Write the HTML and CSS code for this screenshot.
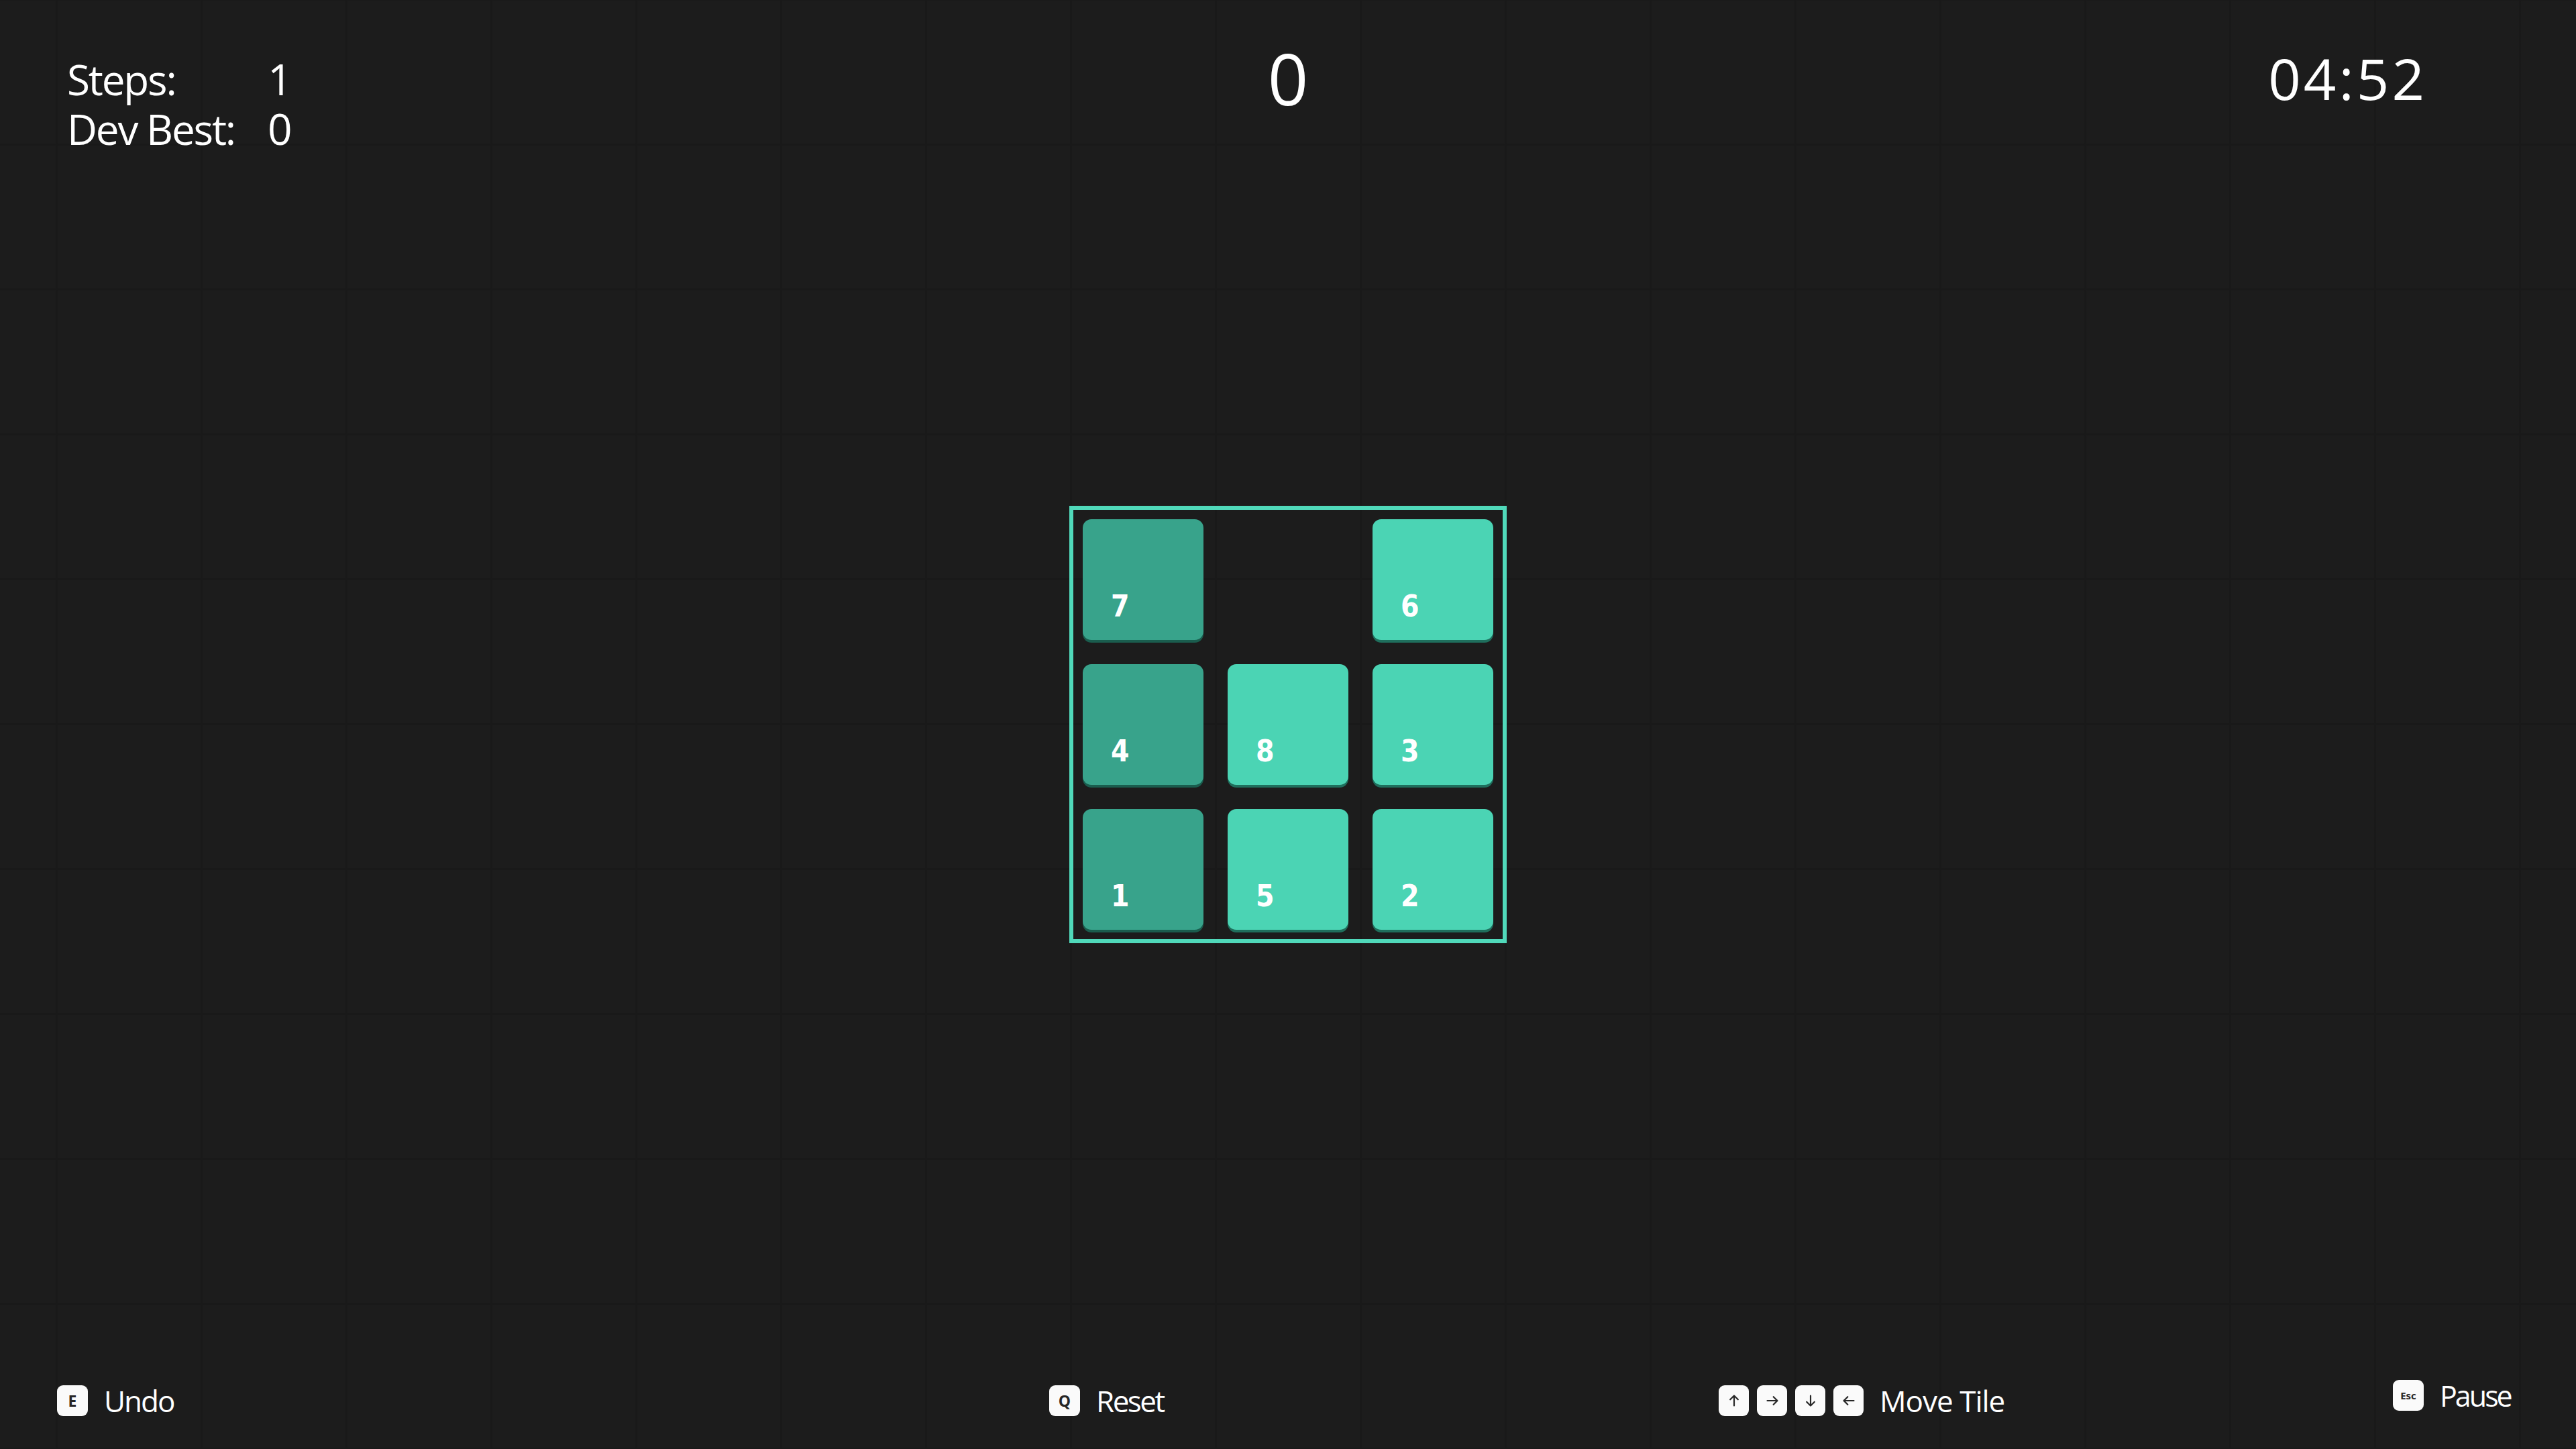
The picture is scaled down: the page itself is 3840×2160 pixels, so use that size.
FILE: index.html
```html
<!DOCTYPE html>
<html lang="en">
<head>
<meta charset="utf-8">
<title>Sliding Puzzle</title>
<link rel="stylesheet" href="styles.css">
</head>
<body>
<div class="screen">
  <header class="hud">
    <div class="stats">
      <span class="stat-label">Steps:</span><span class="stat-value">1</span>
      <span class="stat-label">Dev Best:</span><span class="stat-value">0</span>
    </div>
    <div class="score">0</div>
    <div class="timer">04:52</div>
  </header>

  <main class="stage">
    <div class="board">
      <div class="tile tile--placed"><span class="tile-num">7</span></div>
      <div class="cell-empty"></div>
      <div class="tile"><span class="tile-num">6</span></div>
      <div class="tile tile--placed"><span class="tile-num">4</span></div>
      <div class="tile"><span class="tile-num">8</span></div>
      <div class="tile"><span class="tile-num">3</span></div>
      <div class="tile tile--placed"><span class="tile-num">1</span></div>
      <div class="tile"><span class="tile-num">5</span></div>
      <div class="tile"><span class="tile-num">2</span></div>
    </div>
  </main>

  <footer class="controls">
    <div class="ctl ctl--undo">
      <span class="key">E</span>
      <span class="ctl-label">Undo</span>
    </div>
    <div class="ctl ctl--reset">
      <span class="key">Q</span>
      <span class="ctl-label">Reset</span>
    </div>
    <div class="ctl ctl--move">
      <span class="keys">
        <span class="key key--arrow"><svg viewBox="0 0 24 24"><path d="M12 21V3M5 10l7-7 7 7"/></svg></span>
        <span class="key key--arrow"><svg viewBox="0 0 24 24"><path d="M3 12h18M14 5l7 7-7 7"/></svg></span>
        <span class="key key--arrow"><svg viewBox="0 0 24 24"><path d="M12 3v18M5 14l7 7 7-7"/></svg></span>
        <span class="key key--arrow"><svg viewBox="0 0 24 24"><path d="M21 12H3M10 5l-7 7 7 7"/></svg></span>
      </span>
      <span class="ctl-label">Move Tile</span>
    </div>
    <div class="ctl ctl--pause">
      <span class="key key--small">Esc</span>
      <span class="ctl-label">Pause</span>
    </div>
  </footer>
</div>
</body>
</html>
```

FILE: styles.css
```css
html, body {
  margin: 0;
  padding: 0;
}

body {
  width: 3840px;
  height: 2160px;
  overflow: hidden;
  background-color: #1c1c1c;
  background-image:
    linear-gradient(to right, #191919 3px, transparent 3px),
    linear-gradient(to bottom, #191919 3px, transparent 3px);
  background-size: 216px 216px;
  background-position: 83px 214px;
  color: #ffffff;
  font-family: "Open Sans", "Noto Sans", "Liberation Sans", sans-serif;
}

.screen {
  width: 3840px;
  height: 2160px;
  display: flex;
  flex-direction: column;
}

/* ---------- HUD ---------- */
.hud {
  height: 200px;
  flex: none;
  display: grid;
  grid-template-columns: 1fr auto 1fr;
  align-items: start;
}

.stats {
  margin-top: 81px;
  padding-left: 100px;
  display: grid;
  grid-template-columns: 299px auto;
  font-size: 62px;
  line-height: 74px;
  letter-spacing: -2.2px;
}

.stat-value {
  font-size: 64px;
  letter-spacing: 0;
}

.score {
  margin-top: 63px;
  font-size: 106px;
  line-height: 1;
}

.timer {
  justify-self: end;
  margin-top: 74px;
  padding-right: 222px;
  font-size: 85px;
  line-height: 1;
  letter-spacing: 4px;
}

/* ---------- Board ---------- */
.stage {
  flex: 1;
  display: flex;
  align-items: center;
  justify-content: center;
}

.board {
  box-sizing: border-box;
  width: 652px;
  height: 652px;
  border: 6px solid #50d9ba;
  padding: 14px;
  display: grid;
  grid-template-columns: repeat(3, 180px);
  grid-template-rows: repeat(3, 180px);
  gap: 36px;
}

.tile {
  border-radius: 13px;
  background: #4bd4b4;
  box-shadow: 0 4px 0 #1f6f5d;
  display: flex;
  align-items: flex-end;
  padding: 0 0 28px 42px;
  box-sizing: border-box;
}

.tile--placed {
  background: #38a38b;
  box-shadow: 0 4px 0 #1a5d4e;
}

.tile-num {
  font-family: "DejaVu Sans Condensed", "DejaVu Sans", sans-serif;
  font-weight: 700;
  font-size: 44px;
  line-height: 1;
  color: #ffffff;
}

/* ---------- Controls ---------- */
.controls {
  height: 200px;
  flex: none;
  box-sizing: border-box;
  padding: 97px 0 0 85px;
  display: grid;
  grid-template-columns: 1479px 998px 1005px auto;
  align-items: start;
}

.ctl {
  display: flex;
  align-items: center;
  gap: 24px;
}

.ctl--undo,
.ctl--reset,
.ctl--move { margin-top: 8px; }
.ctl--pause { margin-top: 0; }

.ctl-label {
  font-size: 44px;
  line-height: 1;
  letter-spacing: -2px;
}

.ctl--reset .ctl-label {
  letter-spacing: -2.5px;
}

.ctl--move .ctl-label {
  letter-spacing: -1px;
}

.ctl--pause .ctl-label {
  font-size: 43px;
  letter-spacing: -3px;
}

.keys {
  display: flex;
  gap: 12px;
}

.key {
  width: 46px;
  height: 46px;
  border-radius: 9px;
  background: #fafafa;
  color: #262626;
  display: flex;
  align-items: center;
  justify-content: center;
  font-family: "Open Sans", "Liberation Sans", sans-serif;
  font-weight: 700;
  font-size: 23px;
  line-height: 1;
  letter-spacing: 0;
}

.key--arrow {
  width: 45px;
  height: 46px;
}

.key--arrow svg {
  width: 20px;
  height: 20px;
  fill: none;
  stroke: #262626;
  stroke-width: 2.6;
  stroke-linecap: round;
  stroke-linejoin: round;
}

.key--small {
  font-size: 15px;
  font-weight: 700;
}
```
